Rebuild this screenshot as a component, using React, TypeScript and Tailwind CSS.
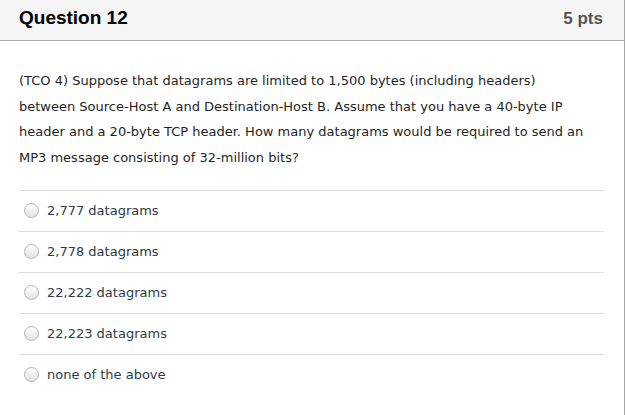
import React from "react";

const options = [
  "2,777 datagrams",
  "2,778 datagrams",
  "22,222 datagrams",
  "22,223 datagrams",
  "none of the above",
];

function Radio() {
  return (
    <span className="inline-block w-[15px] h-[15px] rounded-full border border-[#b4b4b4] bg-gradient-to-b from-[#ffffff] to-[#e2e2e2] shrink-0" />
  );
}

export default function App() {
  return (
    <div className="w-[626px] h-[415px] bg-white overflow-hidden">
      <div className="w-[625px] h-[415px] border-r border-[#a6a6a6]">
        <div className="h-[41px] bg-[#f5f5f5] border-b border-[#aaaaaa] flex items-center justify-between pl-[19px] pr-[21px] pb-[3px]">
          <span
            className="text-[19px] font-bold text-black"
            style={{ fontFamily: '"Liberation Sans", Arial, sans-serif' }}
          >
            Question 12
          </span>
          <span
            className="text-[17px] font-bold text-[#555555]"
            style={{ fontFamily: '"Liberation Sans", Arial, sans-serif' }}
          >
            5 pts
          </span>
        </div>
        <div
          className="pl-[19px] pr-[20px] pt-[27px] text-[#2d3b45]"
          style={{ fontFamily: '"DejaVu Sans", Verdana, sans-serif' }}
        >
          <p className="text-[13px] leading-[25.7px] text-[#1f1f1f] whitespace-nowrap">
            (TCO 4) Suppose that datagrams are limited to 1,500 bytes (including headers)
            <br />
            between Source-Host A and Destination-Host B. Assume that you have a 40-byte IP
            <br />
            header and a 20-byte TCP header. How many datagrams would be required to send an
            <br />
            MP3 message consisting of 32-million bits?
          </p>
          <div className="mt-[19px]">
            {options.map((o) => (
              <div
                key={o}
                className="h-[41px] border-t border-[#dddddd] flex items-center pl-[5px] gap-[8px] text-[13px] text-[#2d3b45]"
              >
                <Radio />
                <span>{o}</span>
              </div>
            ))}
          </div>
        </div>
      </div>
    </div>
  );
}
